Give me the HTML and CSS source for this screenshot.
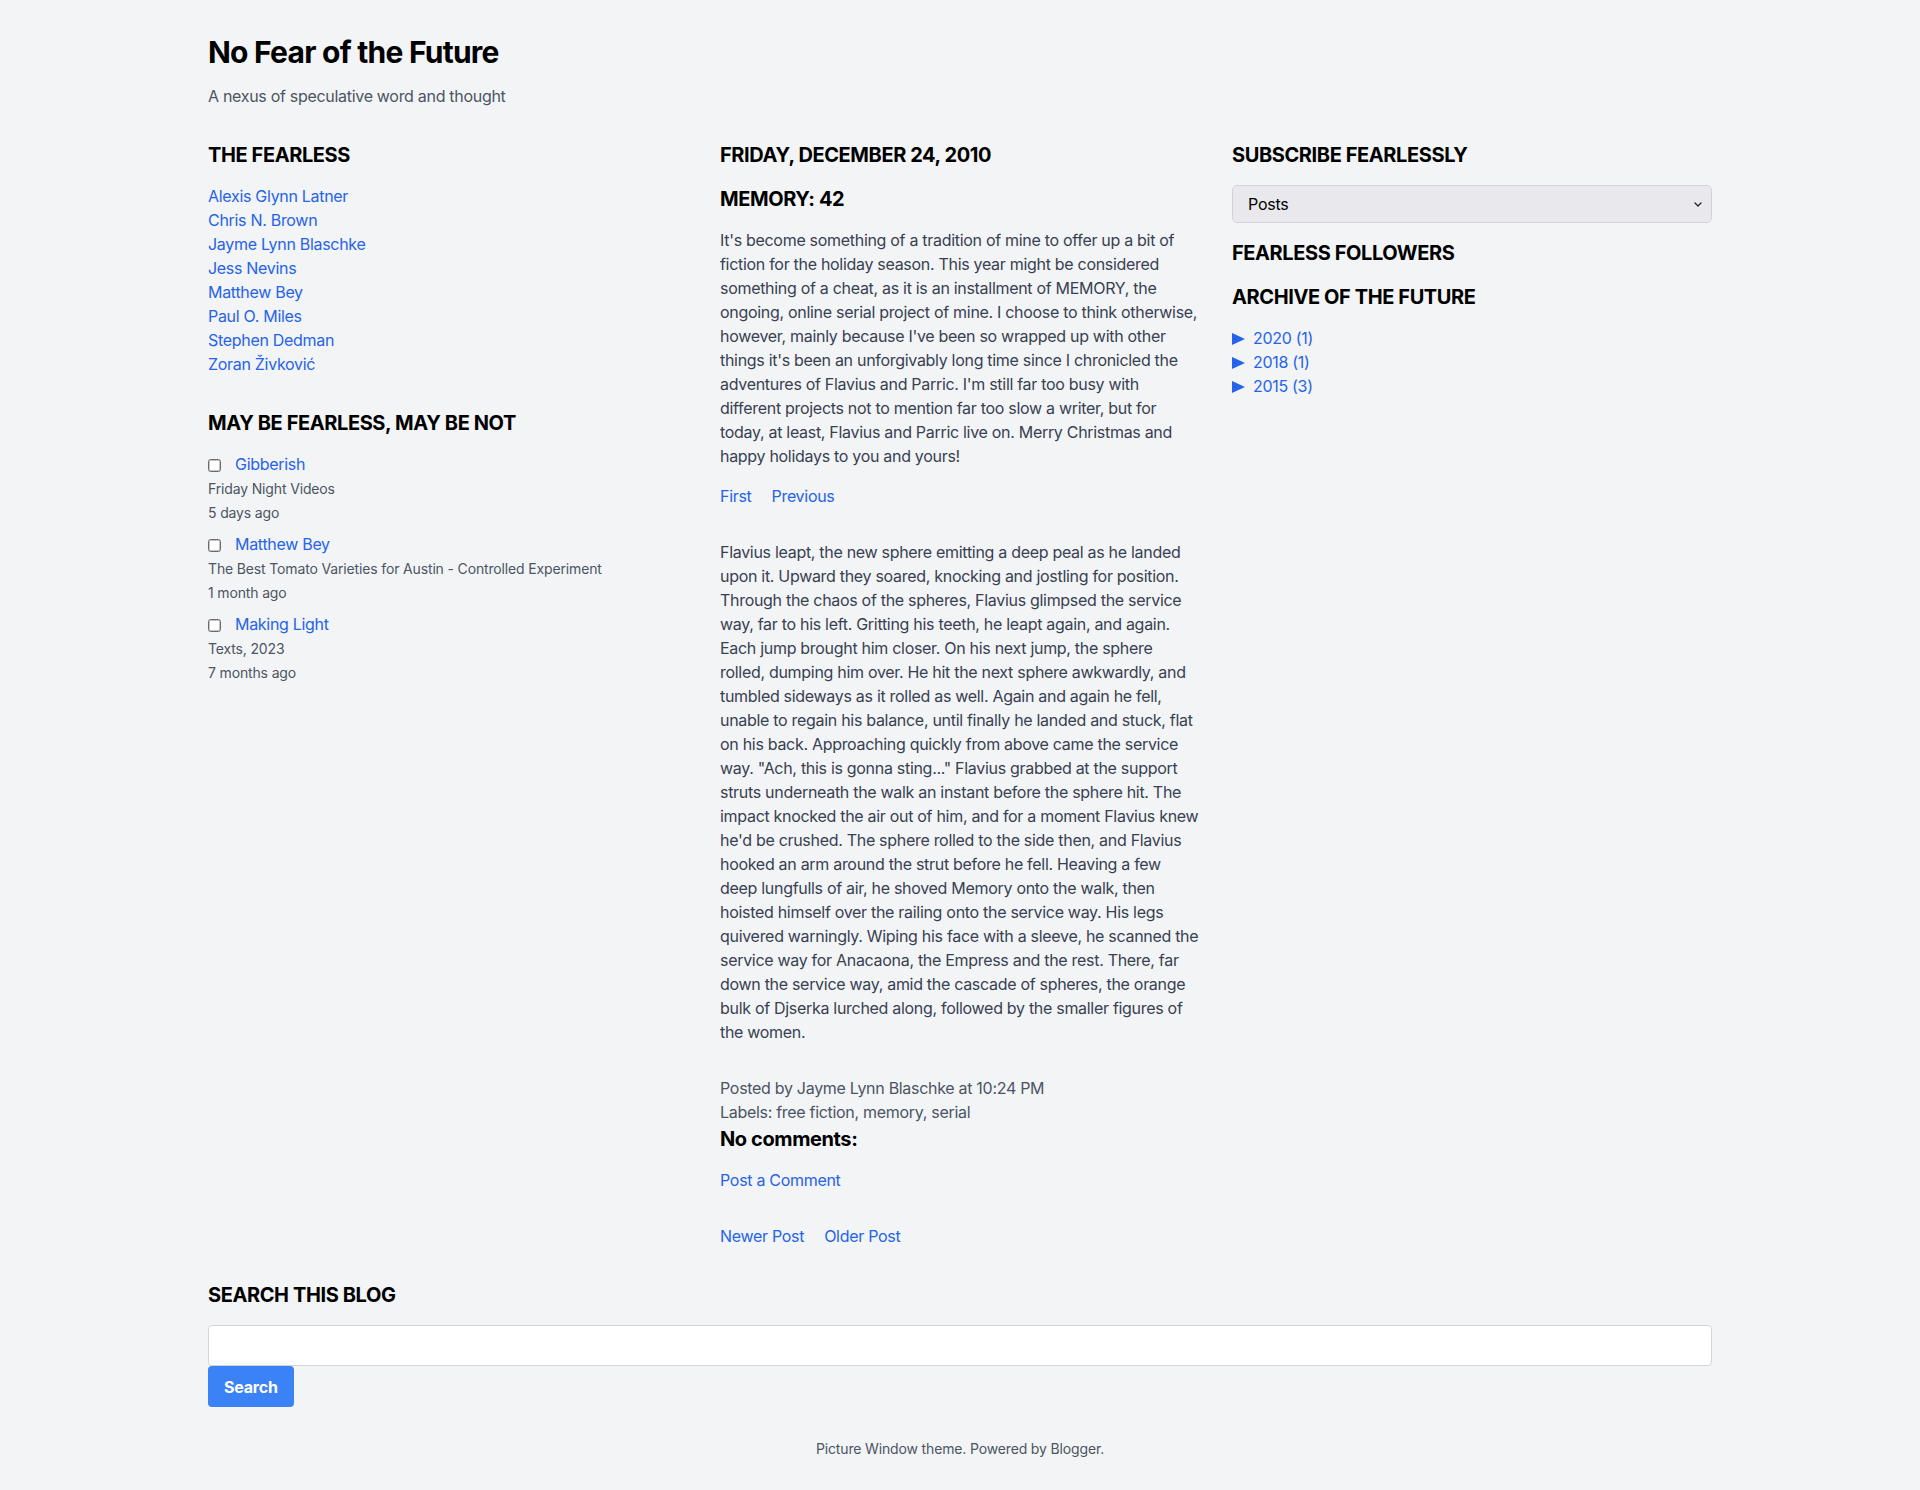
FILE: index.html
```html
<!DOCTYPE html>
<html lang="en">
<head>
<meta charset="utf-8">
<title>No Fear of the Future</title>
<link rel="stylesheet" href="styles.css">
</head>
<body>
<div class="page">
  <header class="site-header">
    <h1 class="site-title">No Fear of the Future</h1>
    <p class="site-desc">A nexus of speculative word and thought</p>
  </header>

  <div class="columns">
    <aside class="col">
      <section class="widget">
        <h2 class="widget-title">The Fearless</h2>
        <ul class="link-list">
          <li><a href="#">Alexis Glynn Latner</a></li>
          <li><a href="#">Chris N. Brown</a></li>
          <li><a href="#">Jayme Lynn Blaschke</a></li>
          <li><a href="#">Jess Nevins</a></li>
          <li><a href="#">Matthew Bey</a></li>
          <li><a href="#">Paul O. Miles</a></li>
          <li><a href="#">Stephen Dedman</a></li>
          <li><a href="#">Zoran Živković</a></li>
        </ul>
      </section>
      <section class="widget widget-spaced">
        <h2 class="widget-title">May Be Fearless, May Be Not</h2>
        <ul class="blog-roll">
          <li class="blog-item">
            <div class="blog-head"><span class="blog-check"></span><a href="#">Gibberish</a></div>
            <div class="blog-meta">Friday Night Videos</div>
            <div class="blog-time">5 days ago</div>
          </li>
          <li class="blog-item">
            <div class="blog-head"><span class="blog-check"></span><a href="#">Matthew Bey</a></div>
            <div class="blog-meta">The Best Tomato Varieties for Austin - Controlled Experiment</div>
            <div class="blog-time">1 month ago</div>
          </li>
          <li class="blog-item">
            <div class="blog-head"><span class="blog-check"></span><a href="#">Making Light</a></div>
            <div class="blog-meta">Texts, 2023</div>
            <div class="blog-time">7 months ago</div>
          </li>
        </ul>
      </section>
    </aside>

    <main class="col">
      <h2 class="widget-title">Friday, December 24, 2010</h2>
      <article class="post">
        <h3 class="post-title">MEMORY: 42</h3>
        <p class="post-text">It's become something of a tradition of mine to offer up a bit of fiction for the holiday season. This year might be considered something of a cheat, as it is an installment of MEMORY, the ongoing, online serial project of mine. I choose to think otherwise, however, mainly because I've been so wrapped up with other things it's been an unforgivably long time since I chronicled the adventures of Flavius and Parric. I'm still far too busy with different projects not to mention far too slow a writer, but for today, at least, Flavius and Parric live on. Merry Christmas and happy holidays to you and yours!</p>
        <nav class="inline-links post-nav"><a href="#">First</a><a href="#">Previous</a></nav>
        <p class="post-text post-story">Flavius leapt, the new sphere emitting a deep peal as he landed upon it. Upward they soared, knocking and jostling for position. Through the chaos of the spheres, Flavius glimpsed the service way, far to his left. Gritting his teeth, he leapt again, and again. Each jump brought him closer. On his next jump, the sphere rolled, dumping him over. He hit the next sphere awkwardly, and tumbled sideways as it rolled as well. Again and again he fell, unable to regain his balance, until finally he landed and stuck, flat on his back. Approaching quickly from above came the service way. "Ach, this is gonna sting..." Flavius grabbed at the support struts underneath the walk an instant before the sphere hit. The impact knocked the air out of him, and for a moment Flavius knew he'd be crushed. The sphere rolled to the side then, and Flavius hooked an arm around the strut before he fell. Heaving a few deep lungfulls of air, he shoved Memory onto the walk, then hoisted himself over the railing onto the service way. His legs quivered warningly. Wiping his face with a sleeve, he scanned the service way for Anacaona, the Empress and the rest. There, far down the service way, amid the cascade of spheres, the orange bulk of Djserka lurched along, followed by the smaller figures of the women.</p>
        <div class="post-footer">
          <div>Posted by Jayme Lynn Blaschke at 10:24 PM</div>
          <div>Labels: free fiction, memory, serial</div>
        </div>
        <h4 class="comments-title">No comments:</h4>
        <a href="#" class="comment-link">Post a Comment</a>
      </article>
      <nav class="inline-links pager"><a href="#">Newer Post</a><a href="#">Older Post</a></nav>
    </main>

    <aside class="col">
      <section class="widget">
        <h2 class="widget-title">Subscribe Fearlessly</h2>
        <div class="select-wrap">
          <select class="select"><option>Posts</option></select>
          <svg class="select-chevron" width="8" height="5" viewBox="0 0 8 5" aria-hidden="true"><path d="M1 1l3 3 3-3" fill="none" stroke="#222" stroke-width="1.3" stroke-linecap="round" stroke-linejoin="round"/></svg>
        </div>
      </section>
      <section class="widget widget-gap">
        <h2 class="widget-title">Fearless Followers</h2>
      </section>
      <section class="widget widget-gap">
        <h2 class="widget-title">Archive of the Future</h2>
        <ul class="archive-list">
          <li><a href="#"><svg class="arrow" width="13" height="12" viewBox="0 0 13 12" aria-hidden="true"><path d="M0 0L13 6L0 12Z" fill="#2563eb"/></svg>2020 (1)</a></li>
          <li><a href="#"><svg class="arrow" width="13" height="12" viewBox="0 0 13 12" aria-hidden="true"><path d="M0 0L13 6L0 12Z" fill="#2563eb"/></svg>2018 (1)</a></li>
          <li><a href="#"><svg class="arrow" width="13" height="12" viewBox="0 0 13 12" aria-hidden="true"><path d="M0 0L13 6L0 12Z" fill="#2563eb"/></svg>2015 (3)</a></li>
        </ul>
      </section>
    </aside>
  </div>

  <section class="search">
    <h2 class="widget-title">Search This Blog</h2>
    <form class="search-form">
      <input type="text" class="search-input" aria-label="Search">
      <button type="button" class="search-btn">Search</button>
    </form>
  </section>

  <footer class="site-footer">Picture Window theme. Powered by Blogger.</footer>
</div>
</body>
</html>
```

FILE: styles.css
```css
* { box-sizing: border-box; }

html, body {
  margin: 0;
  padding: 0;
  background: #f3f4f6;
}

body {
  font-family: Inter, "Liberation Sans", Arial, sans-serif;
  font-size: 16px;
  line-height: 24px;
  letter-spacing: -0.3px;
  color: #000;
}

a {
  color: #2563eb;
  text-decoration: none;
}

ul {
  list-style: none;
  margin: 0;
  padding: 0;
}

.page {
  max-width: 1536px;
  margin: 0 auto;
  padding: 34px 16px 32px;
}

.site-title {
  margin: 0;
  font-size: 30px;
  line-height: 36px;
  font-weight: 700;
  letter-spacing: -0.75px;
  color: #000;
}

.site-desc {
  margin: 14px 0 0;
  color: #4b5563;
}

.columns {
  display: grid;
  grid-template-columns: repeat(3, 1fr);
  gap: 32px;
  margin-top: 33px;
  align-items: start;
}

.widget-title {
  margin: 0;
  font-size: 20px;
  line-height: 28px;
  font-weight: 700;
  letter-spacing: -0.4px;
  text-transform: uppercase;
  color: #000;
}

.link-list {
  margin-top: 15px;
}

.widget-spaced {
  margin-top: 33px;
}

.widget-gap {
  margin-top: 16px;
}

.blog-roll {
  margin-top: 15px;
}

.blog-item {
  margin-bottom: 9px;
}

.blog-head {
  display: flex;
  align-items: center;
}

.blog-check {
  flex: none;
  width: 13px;
  height: 13px;
  margin: 2px 14px 0 0;
  background: #fff;
  border: 1px solid #6a6a6a;
  box-shadow: inset 0 0 0 1px rgba(106, 106, 106, 0.4);
  border-radius: 2.5px;
}

.blog-meta,
.blog-time {
  font-size: 14px;
  line-height: 20px;
  letter-spacing: -0.15px;
  color: #4b5563;
}

.blog-meta { margin-top: 3px; }
.blog-time { margin-top: 4px; }

.post-title {
  margin: 16px 0 0;
  font-size: 20px;
  line-height: 28px;
  font-weight: 700;
  letter-spacing: -0.4px;
  color: #000;
}

.post-text {
  margin: 15px 0 0;
  color: #374151;
}

.inline-links {
  display: flex;
  gap: 20px;
}

.post-nav {
  margin-top: 16px;
}

.post-story {
  margin-top: 32px;
}

.post-footer {
  margin-top: 32px;
  color: #4b5563;
}

.comments-title {
  margin: 1px 0 0;
  font-size: 20px;
  line-height: 28px;
  font-weight: 700;
  letter-spacing: -0.4px;
  color: #000;
}

.comment-link {
  display: inline-block;
  margin-top: 15px;
}

.pager {
  margin-top: 32px;
}

.select-wrap {
  position: relative;
  margin-top: 16px;
}

.select {
  display: block;
  width: 100%;
  height: 38px;
  margin: 0;
  padding: 0 30px 0 15px;
  font-family: inherit;
  font-size: 16px;
  letter-spacing: -0.25px;
  color: #000;
  background: #e9e9ed;
  border: 1px solid #d4d4d8;
  border-radius: 5px;
  -webkit-appearance: none;
  appearance: none;
}

.select-chevron {
  position: absolute;
  right: 10px;
  top: 17px;
  pointer-events: none;
}

.archive-list {
  margin-top: 15px;
}

.archive-list li {
  height: 24px;
}

.arrow {
  display: inline-block;
  margin-right: 8px;
  vertical-align: -1px;
}

.search {
  margin-top: 33px;
}

.search-form {
  margin-top: 16px;
}

.search-input {
  display: block;
  width: 100%;
  height: 41px;
  margin: 0;
  padding: 8px 12px;
  font-family: inherit;
  font-size: 16px;
  background: #fff;
  border: 1px solid #d1d5db;
  border-radius: 4px;
}

.search-btn {
  display: block;
  margin: 0;
  height: 41px;
  padding: 0 16px;
  font-family: inherit;
  font-size: 16px;
  font-weight: 700;
  letter-spacing: -0.2px;
  color: #fff;
  background: #3b82f6;
  border: 0;
  border-radius: 4px;
}

.site-footer {
  margin-top: 32px;
  text-align: center;
  font-size: 14px;
  line-height: 20px;
  letter-spacing: -0.15px;
  color: #4b5563;
}
```
